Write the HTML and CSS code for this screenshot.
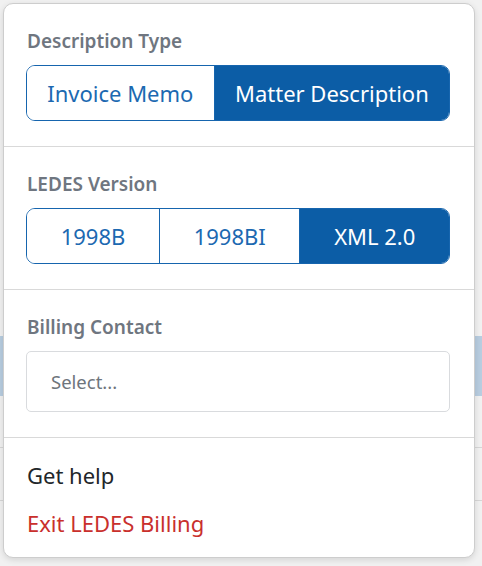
FILE: index.html
```html
<!DOCTYPE html>
<html lang="en">
<head>
<meta charset="utf-8">
<title>LEDES Billing menu</title>
<link rel="stylesheet" href="styles.css">
</head>
<body>
<div class="backdrop">
  <div class="bg-top"></div>
  <div class="bg-row bg-selected"></div>
  <div class="bg-row bg-a"></div>
  <div class="bg-row bg-b"></div>
</div>
<div class="popover">
  <section class="section">
    <div class="label">Description Type</div>
    <div class="btn-group">
      <button class="btn">Invoice Memo</button>
      <button class="btn active">Matter Description</button>
    </div>
  </section>
  <section class="section">
    <div class="label">LEDES Version</div>
    <div class="btn-group">
      <button class="btn">1998B</button>
      <button class="btn">1998BI</button>
      <button class="btn active">XML 2.0</button>
    </div>
  </section>
  <section class="section">
    <div class="label">Billing Contact</div>
    <div class="select">Select...</div>
  </section>
  <section class="links">
    <div class="link">Get help</div>
    <div class="link danger">Exit LEDES Billing</div>
  </section>
</div>
</body>
</html>
```
FILE: styles.css
```css
* { box-sizing: border-box; }
html, body {
  margin: 0;
  padding: 0;
  width: 482px;
  height: 566px;
  overflow: hidden;
  background: #f1f1f1;
  font-family: "Noto Sans", "Open Sans", sans-serif;
}
.backdrop {
  display: flex;
  flex-direction: column;
}
.bg-top { height: 336px; }
.bg-row { border-bottom: 1px solid #d6d6d6; }
.bg-selected { height: 60px; background: #b8cde0; border-bottom: none; }
.bg-a { height: 52px; }
.bg-b { height: 53px; }

.popover {
  position: absolute;
  left: 3px;
  top: 3px;
  width: 472px;
  background: #fff;
  border: 1px solid #cdcdcd;
  border-radius: 10px;
  box-shadow: 0 2px 6px rgba(0,0,0,0.12);
}
.section {
  padding: 25px 24px 25px 22px;
  border-bottom: 1px solid #d9d9d9;
}
.label {
  font-size: 19px;
  line-height: 24px;
  font-weight: 600;
  color: #6f7680;
  padding-left: 1px;
  margin-bottom: 12px;
}
.btn-group {
  display: flex;
  border: 1px solid #1665ae;
  border-radius: 9px;
  overflow: hidden;
  height: 56px;
}
.btn {
  flex: 1 1 auto;
  border: none;
  border-left: 1px solid #1665ae;
  background: #fff;
  color: #1c69b1;
  font-family: inherit;
  font-size: 22px;
  padding: 0;
  margin: 0;
}
.btn:first-child { border-left: none; }
.btn.active {
  background: #0c5da6;
  color: #fff;
}
.select {
  height: 61px;
  border: 1px solid #d9dbde;
  border-radius: 5px;
  padding-left: 24px;
  display: flex;
  align-items: center;
  font-size: 18.5px;
  color: #6e757c;
}
.links {
  padding: 13px 24px 10px 23px;
}
.link {
  font-size: 22px;
  line-height: 48px;
  color: #22262a;
}
.link.danger { color: #c9302c; }
```
